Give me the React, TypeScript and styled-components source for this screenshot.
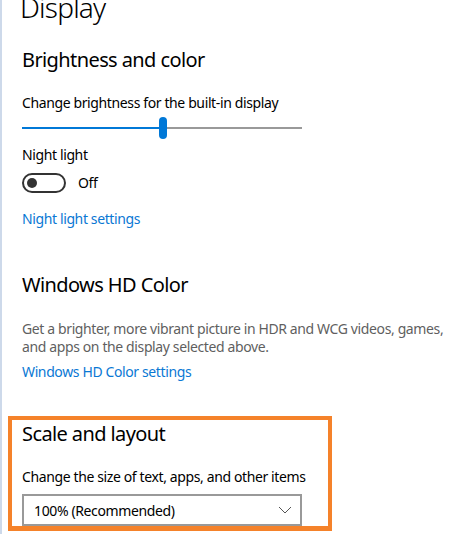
import React from 'react';
import styled, { createGlobalStyle } from 'styled-components';

const GlobalStyle = createGlobalStyle`
  html, body {
    margin: 0;
    padding: 0;
    background: #ffffff;
  }
  body {
    font-family: 'Segoe UI', 'Noto Sans', sans-serif;
    color: #000000;
    overflow: hidden;
  }
`;

const Page = styled.div`
  width: 456px;
  height: 534px;
  box-sizing: border-box;
  border-left: 2px solid #cdd9ea;
  padding-left: 20px;
  overflow: hidden;
  display: flex;
  flex-direction: column;
  align-items: flex-start;
`;

const Title = styled.h1`
  margin: -11px 0 0 -2px;
  font-size: 28px;
  line-height: 36px;
  font-weight: 300;
  letter-spacing: -0.8px;
`;

const Heading = styled.h2<{ $gap: number }>`
  margin: ${({ $gap }) => $gap}px 0 0;
  font-size: 20px;
  line-height: 28px;
  font-weight: 400;
  letter-spacing: -0.6px;
`;

const Label = styled.div<{ $gap: number }>`
  margin-top: ${({ $gap }) => $gap}px;
  font-size: 14px;
  line-height: 20px;
  letter-spacing: -0.38px;
`;

const Description = styled.p`
  margin: 21px 0 0;
  font-size: 14px;
  line-height: 18px;
  letter-spacing: -0.38px;
  color: #5f5f5f;
  max-width: 430px;
`;

const Link = styled.a<{ $gap: number }>`
  margin-top: ${({ $gap }) => $gap}px;
  font-size: 14px;
  line-height: 20px;
  letter-spacing: -0.38px;
  color: #0a78d4;
  text-decoration: none;
  cursor: pointer;
`;

const Slider = styled.div`
  margin-top: 3px;
  width: 280px;
  height: 24px;
  display: flex;
  align-items: center;
`;

const Track = styled.div<{ $filled: boolean }>`
  height: 2px;
  background: ${({ $filled }) => ($filled ? '#0078d7' : '#999999')};
`;

const Thumb = styled.div`
  width: 8px;
  height: 22px;
  border-radius: 4px;
  background: #0078d7;
  flex: none;
`;

const ToggleRow = styled.div`
  margin-top: 8px;
  display: flex;
  align-items: center;
  gap: 12px;
  font-size: 14px;
  line-height: 20px;
  letter-spacing: -0.38px;
`;

const Toggle = styled.div`
  width: 44px;
  height: 20px;
  box-sizing: border-box;
  border: 2px solid #333333;
  border-radius: 10px;
  display: flex;
  align-items: center;
  padding-left: 3px;
`;

const Knob = styled.div`
  width: 10px;
  height: 10px;
  border-radius: 50%;
  background: #333333;
`;

const Highlight = styled.section`
  margin: 34px 0 0 -14px;
  width: 324px;
  box-sizing: border-box;
  border: 4px solid #f5822a;
  border-bottom-width: 5px;
  padding: 0 0 0 10px;
  display: flex;
  flex-direction: column;
  align-items: flex-start;
`;

const Select = styled.div`
  margin-top: 7px;
  width: 280px;
  height: 32px;
  box-sizing: border-box;
  border: 2px solid #999999;
  display: flex;
  align-items: center;
  justify-content: space-between;
  padding: 0 8px 0 10px;
  font-size: 14px;
  letter-spacing: -0.38px;
`;

const Chevron = () => (
  <svg width="14" height="8" viewBox="0 0 14 8" fill="none">
    <path d="M1 1 L7 7 L13 1" stroke="#555555" strokeWidth="1" />
  </svg>
);

export default function App() {
  const brightness = 49;
  return (
    <>
      <GlobalStyle />
      <Page>
        <Title>Display</Title>
        <Heading $gap={21}>Brightness and color</Heading>
        <Label $gap={19}>Change brightness for the built-in display</Label>
        <Slider>
          <Track $filled style={{ width: `${brightness}%` }} />
          <Thumb />
          <Track $filled={false} style={{ flex: 1 }} />
        </Slider>
        <Label $gap={5}>Night light</Label>
        <ToggleRow>
          <Toggle>
            <Knob />
          </Toggle>
          Off
        </ToggleRow>
        <Link $gap={16}>Night light settings</Link>
        <Heading $gap={42}>Windows HD Color</Heading>
        <Description>
          Get a brighter, more vibrant picture in HDR and WCG videos, games, and apps on the display selected above.
        </Description>
        <Link $gap={6}>Windows HD Color settings</Link>
        <Highlight>
          <Heading $gap={0}>Scale and layout</Heading>
          <Label $gap={19}>Change the size of text, apps, and other items</Label>
          <Select>
            100% (Recommended)
            <Chevron />
          </Select>
        </Highlight>
      </Page>
    </>
  );
}
